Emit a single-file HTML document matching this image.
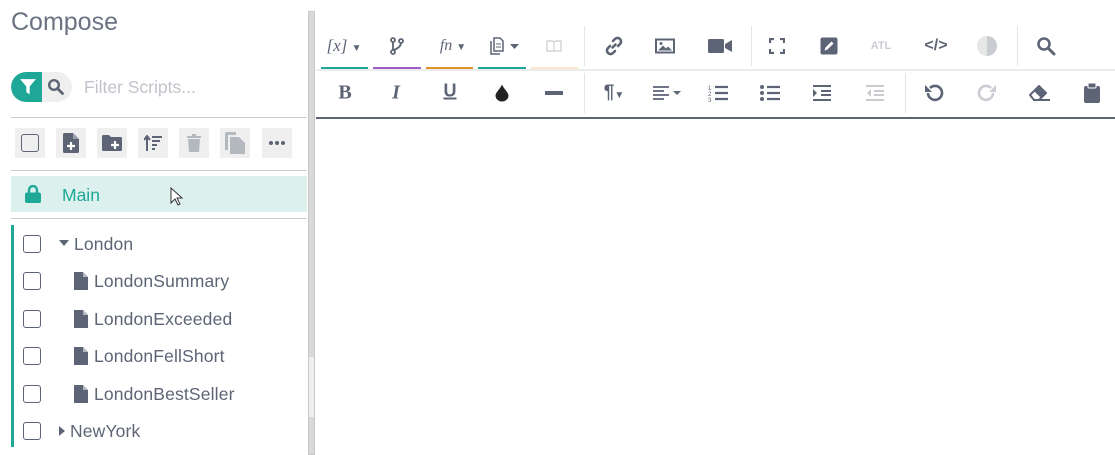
<!DOCTYPE html><html><head><meta charset="utf-8"><style>
*{box-sizing:border-box;margin:0;padding:0}
body{width:1115px;height:455px;background:#fff;position:relative;overflow:hidden;font-family:"Liberation Sans",sans-serif;color:#5d6475}
.a{position:absolute}
.hl{position:absolute;height:1px;background:#c9ccd1}
.tb{position:absolute;width:30px;height:30px;background:#efefef;top:128px}
.cb{position:absolute;left:23px;width:18px;height:18px;border:1.5px solid #5d6475;border-radius:3px}
.it{position:absolute;font-size:17.5px;color:#5d6475;letter-spacing:0.15px}
.ic{position:absolute;transform:translate(-50%,-50%)}
.sep{position:absolute;width:1px;background:#e4e4e4}
</style></head><body>
<div class="a" style="left:11px;top:8px;font-size:25px;color:#6b7282;font-weight:300">Compose</div>
<div class="a" style="left:11px;top:72px;width:61px;height:30px;border-radius:15px;background:#efefef;overflow:hidden">
 <div style="position:absolute;left:0;top:0;width:31px;height:30px;background:#1fa797;border-radius:15px 0 0 15px"></div>
 <svg class="a" style="left:8px;top:6px" width="18" height="18" viewBox="0 0 16 16"><path d="M1 1h14l-5.5 6.5v7l-3-2v-5z" fill="#fff"/></svg>
 <svg class="a" style="left:36px;top:6px" width="18" height="18" viewBox="0 0 18 18"><circle cx="7" cy="7" r="4.8" fill="none" stroke="#5d6475" stroke-width="2.4"/><path d="M10.5 10.5l5 5" stroke="#5d6475" stroke-width="2.8" stroke-linecap="round"/></svg>
</div>
<div class="a" style="left:84px;top:77px;font-size:17.5px;color:#c0c4ca">Filter Scripts...</div>
<div class="hl" style="left:11px;top:117px;width:296px"></div>
<div class="tb" style="left:15px"><div class="a" style="left:6px;top:6px;width:18px;height:18px;border:1.5px solid #5d6475;border-radius:3px"></div></div>
<div class="tb" style="left:56px"><svg class="a" style="left:7px;top:5px" width="16" height="20" viewBox="0 0 16 20"><path d="M0 1.5Q0 0 1.5 0H10l6 6v12.5Q16 20 14.5 20h-13Q0 20 0 18.5z" fill="#5d6475"/><path d="M10 0v6h6" fill="#9aa0ab"/><path d="M8 9v8M4 13h8" stroke="#fff" stroke-width="2.2"/></svg></div>
<div class="tb" style="left:97px"><svg class="a" style="left:5px;top:7px" width="20" height="16" viewBox="0 0 20 16"><path d="M0 1.5Q0 0 1.5 0H7l2 2h9.5Q20 2 20 3.5v11q0 1.5-1.5 1.5h-17Q0 16 0 14.5z" fill="#5d6475"/><path d="M13 6v8M9 10h8" stroke="#fff" stroke-width="2.2"/></svg></div>
<div class="tb" style="left:138px"><svg class="a" style="left:6px;top:7px" width="18" height="16" viewBox="0 0 18 16"><path d="M3 16V2M0 5l3-4 3 4" stroke="#5d6475" stroke-width="2" fill="none"/><path d="M8 2h10M8 6h8M8 10h5M8 14h3" stroke="#5d6475" stroke-width="2"/></svg></div>
<div class="tb" style="left:179px"><svg class="a" style="left:8px;top:6px" width="14" height="18" viewBox="0 0 14 18"><path d="M0 2h14v2H0zM5 0h4v2H5zM1 5h12l-1 13H2z" fill="#b4b8bf"/></svg></div>
<div class="tb" style="left:220px"><svg class="a" style="left:5px;top:4px" width="20" height="22" viewBox="0 0 20 22"><path d="M0 2Q0 0 2 0h9v3H3v15H0z" fill="#b4b8bf"/><path d="M5 5h9l6 6v11H5z" fill="#b4b8bf"/></svg></div>
<div class="tb" style="left:262px"><svg class="a" style="left:7px;top:13px" width="16" height="4"><circle cx="2" cy="2" r="2" fill="#5d6475"/><circle cx="8" cy="2" r="2" fill="#5d6475"/><circle cx="14" cy="2" r="2" fill="#5d6475"/></svg></div>
<div class="hl" style="left:11px;top:170px;width:296px"></div>
<div class="a" style="left:11px;top:176px;width:296px;height:36px;background:#dcf1ee"></div>
<svg class="a" style="left:25px;top:185px" width="16" height="18" viewBox="0 0 16 18"><path d="M4 8V5a4 4 0 0 1 8 0v3" stroke="#1fa797" stroke-width="2.4" fill="none"/><rect x="0" y="7.5" width="16" height="10.5" rx="2" fill="#1fa797"/></svg>
<div class="a" style="left:62px;top:185px;font-size:17.5px;color:#1fa797">Main</div>
<svg class="a" style="left:170px;top:187px" width="14" height="20" viewBox="0 0 14 20"><path d="M1 1v15l4-4 3 6 2-1-3-6h5z" fill="#fff" stroke="#333" stroke-width="1"/></svg>
<div class="hl" style="left:11px;top:218px;width:296px"></div>
<div class="a" style="left:11px;top:225px;width:3px;height:222px;background:#1fa797"></div>
<div class="cb" style="top:235px"></div><div class="cb" style="top:272px"></div><div class="cb" style="top:310px"></div><div class="cb" style="top:347px"></div><div class="cb" style="top:385px"></div><div class="cb" style="top:422px"></div>
<svg class="a" style="left:59px;top:240px" width="10" height="6"><path d="M0 0h10L5 6z" fill="#5d6475"/></svg>
<div class="it" style="left:74px;top:234px">London</div>
<svg class="a" style="left:74px;top:272px" width="14" height="18" viewBox="0 0 14 18"><path d="M0 0h9l5 5v13H0z" fill="#5d6475"/><path d="M9 0v5h5" fill="#b4b8bf"/></svg><div class="it" style="left:94px;top:271px">LondonSummary</div>
<svg class="a" style="left:74px;top:310px" width="14" height="18" viewBox="0 0 14 18"><path d="M0 0h9l5 5v13H0z" fill="#5d6475"/><path d="M9 0v5h5" fill="#b4b8bf"/></svg><div class="it" style="left:94px;top:309px">LondonExceeded</div>
<svg class="a" style="left:74px;top:347px" width="14" height="18" viewBox="0 0 14 18"><path d="M0 0h9l5 5v13H0z" fill="#5d6475"/><path d="M9 0v5h5" fill="#b4b8bf"/></svg><div class="it" style="left:94px;top:346px">LondonFellShort</div>
<svg class="a" style="left:74px;top:385px" width="14" height="18" viewBox="0 0 14 18"><path d="M0 0h9l5 5v13H0z" fill="#5d6475"/><path d="M9 0v5h5" fill="#b4b8bf"/></svg><div class="it" style="left:94px;top:384px">LondonBestSeller</div>
<svg class="a" style="left:59px;top:426px" width="6" height="10"><path d="M0 0v10l6-5z" fill="#5d6475"/></svg>
<div class="it" style="left:70px;top:421px">NewYork</div>
<div class="a" style="left:308px;top:11px;width:7px;height:444px;background:#d9d9d9;border:1px solid #c8c8c8"></div>
<div class="a" style="left:309px;top:357px;width:5px;height:60px;background:#efefef"></div>

<div class="a" style="left:321px;top:67px;width:47px;height:2px;background:#1fa797"></div>
<div class="a" style="left:373px;top:67px;width:48px;height:2px;background:#a15ccc"></div>
<div class="a" style="left:426px;top:67px;width:47px;height:2px;background:#e0922e"></div>
<div class="a" style="left:478px;top:67px;width:48px;height:2px;background:#1fa797"></div>
<div class="a" style="left:531px;top:67px;width:47px;height:2px;background:#fbe8cc"></div>
<div class="a" style="left:316px;top:69px;width:799px;height:2px;background:#ececec"></div>
<div class="a" style="left:316px;top:117px;width:799px;height:2px;background:#5d6475"></div>
<div class="sep" style="left:584px;top:26px;height:40px"></div><div class="sep" style="left:751px;top:26px;height:40px"></div><div class="sep" style="left:1017px;top:26px;height:40px"></div>
<div class="sep" style="left:584px;top:73px;height:40px"></div><div class="sep" style="left:905px;top:73px;height:40px"></div>
<div class="ic" style="left:344px;top:46px;font:italic 17px 'Liberation Serif',serif;color:#5d6475;white-space:nowrap">[x] <span style="font-style:normal;font-size:10px">▼</span></div>
<svg class="ic" style="left:397px;top:46px" width="14" height="18" viewBox="0 0 14 18"><circle cx="3" cy="3" r="2" fill="none" stroke="#5d6475" stroke-width="1.8"/><circle cx="3" cy="15" r="2" fill="none" stroke="#5d6475" stroke-width="1.8"/><circle cx="11" cy="4" r="2" fill="none" stroke="#5d6475" stroke-width="1.8"/><path d="M3 5v8M11 6q0 4-7 7" stroke="#5d6475" stroke-width="1.8" fill="none"/></svg>
<div class="ic" style="left:453px;top:46px;font:italic 16px 'Liberation Serif',serif;color:#5d6475;white-space:nowrap">fn <span style="font-style:normal;font-size:10px">▼</span></div>
<svg class="ic" style="left:505px;top:46px" width="30" height="18" viewBox="0 0 30 18"><path d="M4 1h6l3 3v10H4z" fill="none" stroke="#5d6475" stroke-width="1.5"/><path d="M1 4v13h9" fill="none" stroke="#5d6475" stroke-width="1.5"/><path d="M6 7h5M6 10h5" stroke="#5d6475"/><path d="M20 7h9l-4.5 5z" fill="#5d6475"/></svg>
<svg class="ic" style="left:554px;top:46px" width="16" height="12" viewBox="0 0 16 12"><path d="M1 1h5.5L8 2l1.5-1H15v10H1z" fill="none" stroke="#c9ccd1" stroke-width="1.2"/><path d="M8 2v9" stroke="#c9ccd1"/></svg>
<svg class="ic" style="left:614px;top:46px" width="20" height="20" viewBox="0 0 20 20"><path d="M8.5 11.5l3-3M9 5l2-2a3.5 3.5 0 0 1 5 5l-2 2M11 15l-2 2a3.5 3.5 0 0 1-5-5l2-2" stroke="#5d6475" stroke-width="2.6" fill="none" stroke-linecap="round"/></svg>
<svg class="ic" style="left:665px;top:46px" width="20" height="15" viewBox="0 0 20 15"><rect x="1" y="1" width="18" height="13" fill="none" stroke="#5d6475" stroke-width="2"/><path d="M3 12l5-5 3 3 2-2 4 4z" fill="#5d6475"/><circle cx="6" cy="5" r="1.5" fill="#5d6475"/></svg>
<svg class="ic" style="left:720px;top:46px" width="24" height="14" viewBox="0 0 24 14"><rect x="0" y="0" width="16" height="14" rx="1.5" fill="#5d6475"/><path d="M17 5l7-4v12l-7-4z" fill="#5d6475"/></svg>
<svg class="ic" style="left:777px;top:46px" width="16" height="16" viewBox="0 0 16 16"><path d="M1 5V1h4M11 1h4v4M15 11v4h-4M5 15H1v-4" stroke="#5d6475" stroke-width="2.2" fill="none"/></svg>
<svg class="ic" style="left:829px;top:46px" width="17" height="17" viewBox="0 0 17 17"><rect width="17" height="17" rx="2" fill="#5d6475"/><path d="M4 13l1-3 6-6 2 2-6 6z" fill="#fff"/></svg>
<div class="ic" style="left:881px;top:46px;font:bold 11px 'Liberation Sans Narrow','Liberation Sans',sans-serif;color:#c9ccd1">ATL</div>
<div class="ic" style="left:936px;top:46px;font:bold 16px 'Liberation Sans',sans-serif;color:#5d6475;white-space:nowrap">&lt;/&gt;</div>
<svg class="ic" style="left:987px;top:46px" width="20" height="20" viewBox="0 0 20 20"><circle cx="10" cy="10" r="10" fill="#e6e6e6"/><path d="M10 0a10 10 0 0 1 0 20z" fill="#c9ccd1"/></svg>
<svg class="ic" style="left:1046px;top:46px" width="20" height="20" viewBox="0 0 20 20"><circle cx="8" cy="8" r="5.5" fill="none" stroke="#5d6475" stroke-width="2.6"/><path d="M12 12l6 6" stroke="#5d6475" stroke-width="3" stroke-linecap="round"/></svg>
<div class="ic" style="left:345px;top:93px;font:bold 20px 'Liberation Serif',serif">B</div>
<div class="ic" style="left:396px;top:93px;font:italic bold 20px 'Liberation Serif',serif">I</div>
<div class="ic" style="left:450px;top:91px;font:bold 18px 'Liberation Sans',sans-serif;text-decoration:underline;text-decoration-thickness:2px">U</div>
<svg class="ic" style="left:502px;top:93px" width="13" height="17" viewBox="0 0 13 17"><path d="M6.5 0C5 4 0 8 0 11a6.5 6 0 0 0 13 0C13 8 8 4 6.5 0z" fill="#222"/></svg>
<div class="ic" style="left:554px;top:93px;width:18px;height:4px;background:#5d6475"></div>
<div class="ic" style="left:614px;top:93px;font:bold 19px 'Liberation Sans',sans-serif;white-space:nowrap">¶<span style="font-size:10px">▼</span></div>
<svg class="ic" style="left:667px;top:93px" width="28" height="16" viewBox="0 0 28 16"><path d="M0 2h16M0 6h11M0 10h16M0 14h11" stroke="#5d6475" stroke-width="1.8"/><path d="M20 6h8l-4 4z" fill="#5d6475"/></svg>
<svg class="ic" style="left:718px;top:93px" width="20" height="18" viewBox="0 0 20 18"><path d="M7 3h13M7 9h13M7 15h13" stroke="#5d6475" stroke-width="2.2"/><text x="0" y="6" font-size="6" fill="#5d6475">1</text><text x="0" y="12" font-size="6" fill="#5d6475">2</text><text x="0" y="18" font-size="6" fill="#5d6475">3</text></svg>
<svg class="ic" style="left:770px;top:93px" width="20" height="18" viewBox="0 0 20 18"><path d="M7 3h13M7 9h13M7 15h13" stroke="#5d6475" stroke-width="2.2"/><circle cx="2" cy="3" r="2" fill="#5d6475"/><circle cx="2" cy="9" r="2" fill="#5d6475"/><circle cx="2" cy="15" r="2" fill="#5d6475"/></svg>
<svg class="ic" style="left:822px;top:93px" width="18" height="16" viewBox="0 0 18 16"><path d="M0 1h18M8 6h10M8 10h10M0 15h18" stroke="#5d6475" stroke-width="2"/><path d="M0 4l4 4-4 4z" fill="#5d6475"/></svg>
<svg class="ic" style="left:875px;top:93px" width="18" height="16" viewBox="0 0 18 16"><path d="M0 1h18M8 6h10M8 10h10M0 15h18" stroke="#c9ccd1" stroke-width="2"/><path d="M5 4L1 8l4 4z" fill="#c9ccd1"/></svg>
<svg class="ic" style="left:934px;top:93px" width="20" height="20" viewBox="0 0 20 20"><path d="M4 10a7 7 0 1 0 2-5" stroke="#5d6475" stroke-width="2.6" fill="none"/><path d="M1 2v7h7z" fill="#5d6475"/></svg>
<svg class="ic" style="left:987px;top:93px" width="20" height="20" viewBox="0 0 20 20"><path d="M16 10a7 7 0 1 1-2-5" stroke="#c9ccd1" stroke-width="2.6" fill="none"/><path d="M19 2v7h-7z" fill="#c9ccd1"/></svg>
<svg class="ic" style="left:1040px;top:93px" width="22" height="16" viewBox="0 0 22 16"><path d="M1 10L10 1l7 7-7 7H5z" fill="none" stroke="#5d6475" stroke-width="2"/><path d="M10 1l7 7-5 5-7-7z" fill="#5d6475"/><path d="M8 15h13" stroke="#5d6475" stroke-width="2"/></svg>
<svg class="ic" style="left:1092px;top:93px" width="16" height="20" viewBox="0 0 16 20"><rect x="0" y="3" width="16" height="17" rx="2" fill="#5d6475"/><rect x="4" y="0" width="8" height="5" rx="1" fill="#5d6475" stroke="#fff" stroke-width="1"/></svg>
</body></html>
